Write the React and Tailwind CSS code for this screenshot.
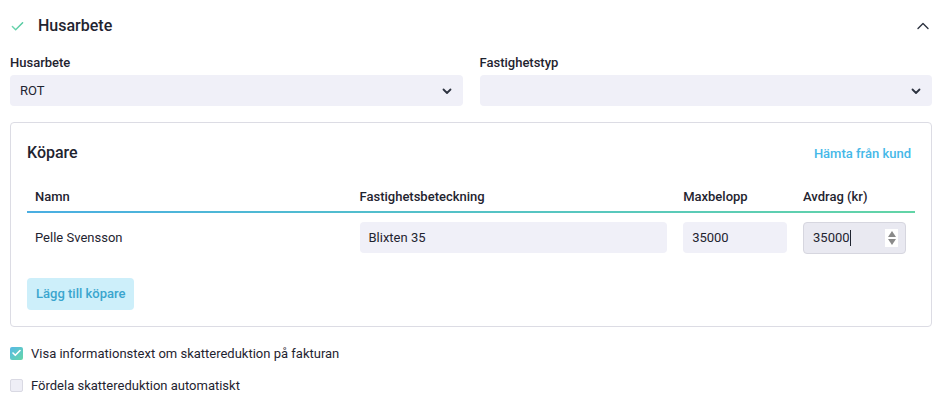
import React from "react";

function ChevronDown() {
  return (
    <svg width="12" height="12" viewBox="0 0 12 12" fill="none" className="text-[#2d3340]">
      <path d="M2.5 4.5L6 8l3.5-3.5" stroke="currentColor" strokeWidth="1.8" strokeLinecap="round" strokeLinejoin="round" />
    </svg>
  );
}

function Select({ label, value }) {
  return (
    <div className="flex-1 flex flex-col">
      <label className="text-[13px] font-medium text-[#1f2430] mb-[3px] leading-[18px]">{label}</label>
      <div className="h-[31px] rounded-[4px] bg-[#f0f0f8] flex items-center justify-between pl-[10px] pr-[10px]">
        <span className="text-[13px] text-[#1f2430]">{value}</span>
        <ChevronDown />
      </div>
    </div>
  );
}

export default function App() {
  return (
    <div
      className="w-[945px] h-[404px] bg-white px-[10px] pt-[14px] text-[#1f2430] overflow-hidden"
      style={{ fontFamily: 'Roboto, "Noto Sans", sans-serif' }}
    >
      {/* Header */}
      <div className="flex items-center justify-between h-[24px]">
        <div className="flex items-center">
          <svg width="13" height="12" viewBox="0 0 14 12" fill="none" className="ml-[1px]">
            <defs>
              <linearGradient id="chk" x1="0" y1="0" x2="1" y2="0">
                <stop offset="0" stopColor="#6fd6b0" />
                <stop offset="1" stopColor="#52c9a0" />
              </linearGradient>
            </defs>
            <path d="M1.5 6.5l3.5 3.5L12.5 2.5" stroke="url(#chk)" strokeWidth="1.6" strokeLinecap="round" strokeLinejoin="round" />
          </svg>
          <span className="ml-[14px] text-[16px] font-medium text-[#1f2430]">Husarbete</span>
        </div>
        <svg width="14" height="10" viewBox="0 0 14 10" fill="none" className="mr-[5px]">
          <path d="M2 7.5L7 2.5l5 5" stroke="#2d3340" strokeWidth="1.4" strokeLinecap="round" strokeLinejoin="round" />
        </svg>
      </div>

      {/* Selects */}
      <div className="flex gap-[17px] mt-[16px] pr-[3px]">
        <Select label="Husarbete" value="ROT" />
        <Select label="Fastighetstyp" value="" />
      </div>

      {/* Card */}
      <div className="mt-[16px] mr-[3px] border border-[#dcdce4] rounded-[4px] px-[16px] pt-[18px] pb-[16px]">
        <div className="flex items-center justify-between">
          <span className="text-[16px] font-medium text-[#1f2430]">Köpare</span>
          <span className="text-[13px] font-medium text-[#45b8e8] mr-[4px] mt-[1px]">Hämta från kund</span>
        </div>

        <table className="w-full mt-[22px] border-collapse">
          <thead>
            <tr className="text-left text-[13px]">
              <th className="w-[325px] px-[8px] pb-[4px] font-medium">Namn</th>
              <th className="w-[324px] px-[8px] pb-[4px] font-medium">Fastighetsbeteckning</th>
              <th className="w-[120px] px-[8px] pb-[4px] font-medium">Maxbelopp</th>
              <th className="w-[120px] px-[8px] pb-[4px] font-medium">Avdrag (kr)</th>
            </tr>
            <tr>
              <td colSpan={4} className="p-0">
                <div className="h-[2px] bg-gradient-to-r from-[#4aaee2] to-[#62d4a6]" />
              </td>
            </tr>
          </thead>
          <tbody>
            <tr className="text-[13px]">
              <td className="px-[8px] pt-[9px]">Pelle Svensson</td>
              <td className="px-[8px] pt-[9px]">
                <div className="h-[31px] rounded-[4px] bg-[#f0f0f8] flex items-center px-[9px]">Blixten 35</div>
              </td>
              <td className="px-[8px] pt-[9px]">
                <div className="h-[31px] rounded-[4px] bg-[#f0f0f8] flex items-center px-[9px]">35000</div>
              </td>
              <td className="pl-[8px] pr-[9px] pt-[9px]">
                <div className="h-[32px] rounded-[4px] bg-[#e9e9f1] border border-[#d6d6df] flex items-center justify-between pl-[9px] pr-[7px]">
                  <span className="flex items-center">
                    35000<span className="inline-block w-[1px] h-[16px] bg-[#1f2430]" />
                  </span>
                  <span className="flex flex-col items-center justify-center w-[13px] h-[18px] bg-white gap-[2px]">
                    <span className="w-0 h-0 border-l-[4px] border-r-[4px] border-b-[6px] border-l-transparent border-r-transparent border-b-[#8a8a8a]" />
                    <span className="w-0 h-0 border-l-[4px] border-r-[4px] border-t-[6px] border-l-transparent border-r-transparent border-t-[#8a8a8a]" />
                  </span>
                </div>
              </td>
            </tr>
          </tbody>
        </table>

        <button className="mt-[24px] h-[32px] px-[9px] rounded-[4px] bg-[#cdeffa] text-[13px] font-medium text-[#3aa5ce]">
          Lägg till köpare
        </button>
      </div>

      {/* Checkboxes */}
      <div className="mt-[17px] flex items-center text-[13px] text-[#1f2430]">
        <span className="w-[13px] h-[13px] rounded-[2px] bg-gradient-to-br from-[#58b8e6] to-[#66d6a6] flex items-center justify-center">
          <svg width="9" height="8" viewBox="0 0 9 8" fill="none">
            <path d="M1 4l2.3 2.3L8 1.5" stroke="white" strokeWidth="1.6" strokeLinecap="round" strokeLinejoin="round" />
          </svg>
        </span>
        <span className="ml-[8px]">Visa informationstext om skattereduktion på fakturan</span>
      </div>
      <div className="mt-[13px] flex items-center text-[13px] text-[#1f2430]">
        <span className="w-[13px] h-[13px] rounded-[2px] bg-[#eeeef6] border border-[#d9d9e3]" />
        <span className="ml-[8px]">Fördela skattereduktion automatiskt</span>
      </div>
    </div>
  );
}
